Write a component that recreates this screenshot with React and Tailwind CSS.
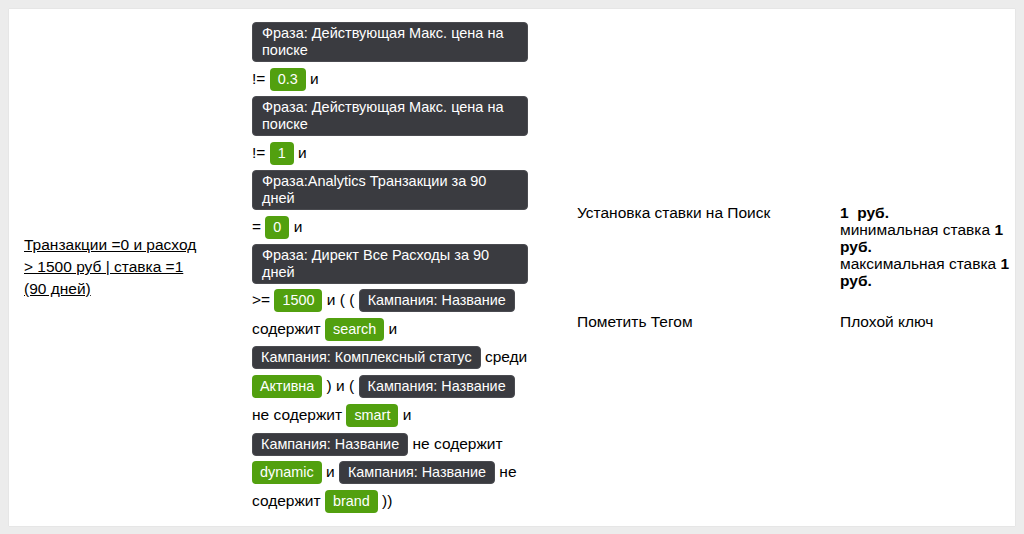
import React from "react";

const font = { fontFamily: '"Liberation Sans", Arial, sans-serif' };

function Block({ children }) {
    return (
        <div className="block my-[2px] rounded-[4px] bg-[#3a3b40] text-white text-[14.5px] px-[9px] py-[2px] leading-[17px] border border-[#4a4b50]">
            {children}
        </div>
    );
}

function Dark({ children }) {
    return (
        <span className="inline-block rounded-[4px] bg-[#3a3b40] text-white text-[14.4px] px-[8px] py-[2px] leading-[17px] border border-[#4a4b50] whitespace-nowrap">
            {children}
        </span>
    );
}

function Green({ children }) {
    return (
        <span className="inline-block rounded-[4px] bg-[#52a00f] text-white text-[14.4px] px-2 py-[3px] leading-[17px] whitespace-nowrap">
            {children}
        </span>
    );
}

export default function App() {
    return (
        <div className="min-h-[534px] bg-[#ececec] p-[9px]" style={font}>
            <div className="bg-white w-[1006px] flex text-[15.5px] text-black shadow-[0_0_1px_rgba(0,0,0,0.15)]">
                {/* Rule name */}
                <div className="w-[243px] pl-[15px] pr-[48px] flex items-center">
                    <a href="#" className="underline leading-[22px] text-black">
                        Транзакции =0 и расход &gt; 1500 руб | ставка =1 (90 дней)
                    </a>
                </div>

                {/* Conditions */}
                <div className="w-[276px] pt-[11px] pb-[10px]">
                    <Block>Фраза: Действующая Макс. цена на поиске</Block>
                    <div className="leading-[30px]">
                        != <Green>0.3</Green> и
                    </div>
                    <Block>Фраза: Действующая Макс. цена на поиске</Block>
                    <div className="leading-[30px]">
                        != <Green>1</Green> и
                    </div>
                    <Block>Фраза:Analytics Транзакции за 90 дней</Block>
                    <div className="leading-[30px]">
                        = <Green>0</Green> и
                    </div>
                    <Block>Фраза: Директ Все Расходы за 90 дней</Block>
                    <div className="leading-[28.7px] -mr-[4px]">
                        &gt;= <Green>1500</Green> и ( ( <Dark>Кампания: Название</Dark> содержит{" "}
                        <Green>search</Green> и <Dark>Кампания: Комплексный статус</Dark> среди{" "}
                        <Green>Активна</Green> ) и ( <Dark>Кампания: Название</Dark> не содержит{" "}
                        <Green>smart</Green> и <Dark>Кампания: Название</Dark> не содержит{" "}
                        <Green>dynamic</Green> и <Dark>Кампания: Название</Dark> не содержит{" "}
                        <Green>brand</Green> ))
                    </div>
                </div>

                {/* Actions */}
                <div className="flex-1 flex flex-col justify-center">
                    <div className="flex py-[12px] leading-[17px]">
                        <div className="w-[312px] pl-[49px]">Установка ставки на Поиск</div>
                        <div className="w-[170px]">
                            <b>1&nbsp; руб.</b>
                            <br />
                            минимальная ставка <b>1 руб.</b>
                            <br />
                            максимальная ставка <b>1 руб.</b>
                        </div>
                    </div>
                    <div className="flex py-[12px] leading-[17px]">
                        <div className="w-[312px] pl-[49px]">Пометить Тегом</div>
                        <div className="w-[170px]">Плохой ключ</div>
                    </div>
                </div>
            </div>
        </div>
    );
}
